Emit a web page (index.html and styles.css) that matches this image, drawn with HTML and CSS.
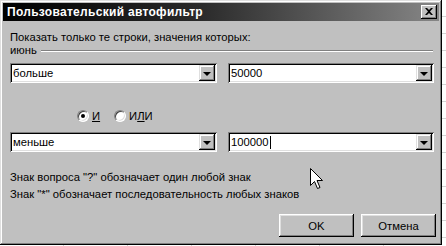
FILE: index.html
```html
<!DOCTYPE html>
<html lang="ru">
<head>
<meta charset="utf-8">
<title>Пользовательский автофильтр</title>
<link rel="stylesheet" href="styles.css">
</head>
<body>
<div class="dialog">
  <div class="titlebar">
    <span class="title">Пользовательский автофильтр</span>
    <span class="close"><svg width="8" height="7" viewBox="0 0 8 7"><path d="M0 0h2l2 2 2-2h2L5 3.5 8 7H6L4 5 2 7H0l3-3.5z" fill="#000"/></svg></span>
  </div>
  <div class="content">
    <p class="prompt">Показать только те строки, значения которых:</p>
    <div class="group"><span class="group-label">июнь</span><span class="etch"></span></div>
    <div class="row first">
      <div class="combo op"><span class="combo-text">больше</span><span class="drop"><span class="arrow"></span></span></div>
      <div class="combo val"><span class="combo-text">50000</span><span class="drop"><span class="arrow"></span></span></div>
    </div>
    <div class="radios">
      <label class="radio"><span class="circle checked"></span><span><u>И</u></span></label>
      <label class="radio"><span class="circle"></span><span>И<u>Л</u>И</span></label>
    </div>
    <div class="row second">
      <div class="combo op"><span class="combo-text">меньше</span><span class="drop"><span class="arrow"></span></span></div>
      <div class="combo val"><span class="combo-text">100000<span class="caret"></span></span><span class="drop"><span class="arrow"></span></span></div>
    </div>
    <p class="hint first-hint">Знак вопроса "?" обозначает один любой знак</p>
    <p class="hint">Знак "*" обозначает последовательность любых знаков</p>
    <div class="buttons">
      <span class="btn">OK</span>
      <span class="btn">Отмена</span>
    </div>
  </div>
  <svg class="cursor" width="13" height="21" viewBox="0 0 13 21"><path d="M0.5 0.5V17.5L4.5 13.5L7.5 20.5L10 19.5L7 12.5H12.5Z" fill="#fff" stroke="#000" stroke-width="1"/></svg>
</div>
</body>
</html>
```
FILE: styles.css
```css
* { box-sizing: border-box; }
html, body { margin: 0; padding: 0; }
body {
  width: 446px;
  height: 246px;
  overflow: hidden;
  background-color: #fff;
  background-image:
    repeating-linear-gradient(to bottom, transparent 0 16px, #d4d4d4 16px 17px),
    repeating-linear-gradient(to right, transparent 0 63px, #d4d4d4 63px 64px);
  font-family: "Liberation Sans", Arial, sans-serif;
  font-size: 11.25px;
  color: #000;
}
.dialog {
  position: relative;
  width: 442px;
  height: 245px;
  background: #c0c0c0;
  padding: 3px;
  box-shadow:
    inset -1px -1px #000,
    inset 1px 1px #dfdfdf,
    inset -2px -2px #808080,
    inset 2px 2px #fff;
  display: flex;
  flex-direction: column;
}
.titlebar {
  height: 18px;
  background: linear-gradient(to right, #000 0%, #2a2a2a 45%, #868686 100%);
  display: flex;
  align-items: center;
  justify-content: space-between;
  padding: 0 2px 0 4px;
}
.title {
  color: #fff;
  font-weight: bold;
  font-size: 12px;
  letter-spacing: 0.3px;
}
.close {
  width: 16px;
  height: 14px;
  background: #c0c0c0;
  box-shadow:
    inset -1px -1px #000,
    inset 1px 1px #fff,
    inset -2px -2px #808080;
  display: flex;
  align-items: center;
  justify-content: center;
  padding-bottom: 1px;
}
.content {
  padding: 0 5px 0 7px;
  display: flex;
  flex-direction: column;
}
p { margin: 0; }
.prompt {
  margin-top: 10px;
  line-height: 13px;
}
.group {
  display: flex;
  align-items: center;
  line-height: 13px;
  height: 13px;
}
.etch {
  flex: 1;
  height: 2px;
  margin-left: 4px;
  margin-right: 1px;
  border-top: 1px solid #808080;
  border-bottom: 1px solid #fff;
}
.row {
  display: flex;
  gap: 11px;
}
.row.first { margin-top: 6px; }
.row.second { margin-top: 10px; }
.combo {
  height: 20px;
  background: #fff;
  padding: 2px;
  box-shadow:
    inset 1px 1px #808080,
    inset -1px -1px #fff,
    inset 2px 2px #000,
    inset -2px -2px #dfdfdf;
  display: flex;
  align-items: center;
}
.combo.op { width: 207px; }
.combo.val { width: 206px; }
.combo-text {
  flex: 1;
  padding-left: 1px;
  line-height: 16px;
  display: flex;
  align-items: center;
}
.caret {
  display: inline-block;
  width: 1px;
  height: 13px;
  background: #000;
  margin-left: 1px;
}
.drop {
  width: 16px;
  height: 16px;
  background: #c0c0c0;
  box-shadow:
    inset -1px -1px #000,
    inset 1px 1px #dfdfdf,
    inset -2px -2px #808080,
    inset 2px 2px #fff;
  display: flex;
  align-items: center;
  justify-content: center;
}
.arrow {
  width: 0;
  height: 0;
  border-left: 4px solid transparent;
  border-right: 4px solid transparent;
  border-top: 4px solid #000;
  margin-top: 1px;
}
.radios {
  margin-top: 26px;
  margin-left: 67px;
  display: flex;
  gap: 14px;
  height: 13px;
  align-items: center;
}
.radio {
  display: flex;
  align-items: center;
  gap: 3px;
}
.circle {
  width: 12px;
  height: 12px;
  border-radius: 50%;
  background: #fff;
  border: 1px solid;
  border-color: #808080 #fff #fff #808080;
  box-shadow: inset 1px 1px #404040, inset -1px -1px #dfdfdf;
  position: relative;
}
.circle.checked::after {
  content: "";
  position: absolute;
  left: 3px;
  top: 3px;
  width: 4px;
  height: 4px;
  border-radius: 50%;
  background: #000;
}
.hint {
  line-height: 17px;
}
.first-hint { margin-top: 17px; }
.buttons {
  margin-top: 11px;
  margin-right: -2px;
  display: flex;
  justify-content: flex-end;
  gap: 7px;
}
.btn {
  width: 75px;
  height: 23px;
  background: #c0c0c0;
  box-shadow:
    inset -1px -1px #000,
    inset 1px 1px #fff,
    inset -2px -2px #808080,
    inset 2px 2px #dfdfdf;
  display: flex;
  align-items: center;
  justify-content: center;
}
.cursor {
  position: absolute;
  left: 310px;
  top: 168px;
}
```
